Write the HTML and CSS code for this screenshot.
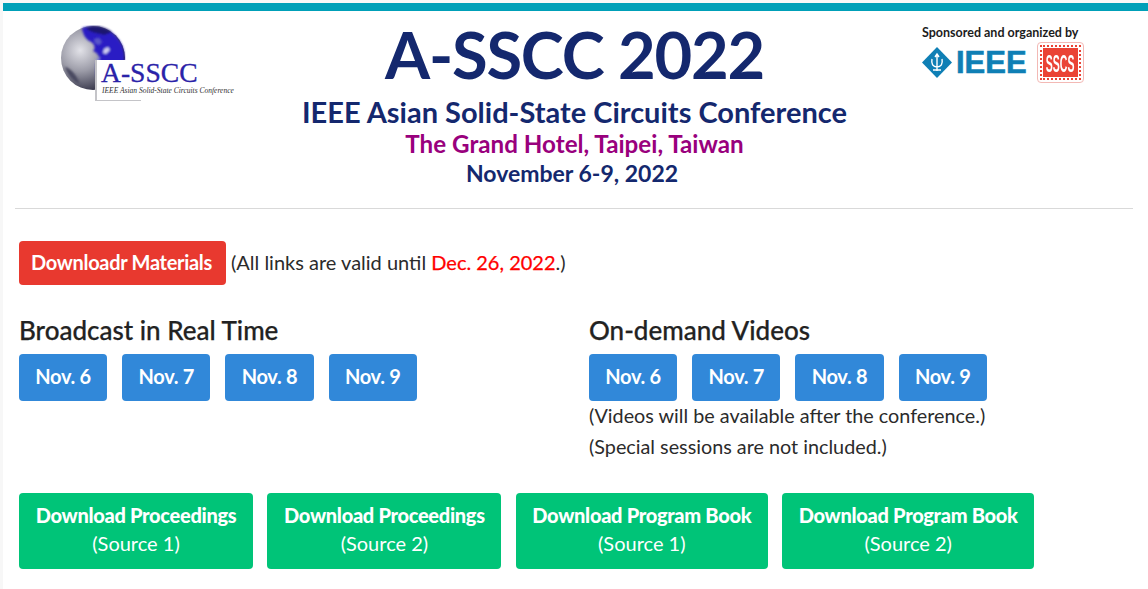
FILE: index.html
```html
<!DOCTYPE html>
<html lang="en">
<head>
    <meta charset="UTF-8">
    <meta name="viewport" content="width=device-width, initial-scale=1.0">
    <title>A-SSCC 2022</title>
    <link rel="stylesheet" href="styles.css">
</head>
<body>
    <div class="page">
        <header class="banner">
            <div class="logo">
                <svg class="globe" width="66" height="66" viewBox="0 0 66 66">
                    <defs>
                        <radialGradient id="globeFill" cx="0.3" cy="0.38" r="0.72">
                            <stop offset="0" stop-color="#e2e2e8"/>
                            <stop offset="0.45" stop-color="#9c9ca8"/>
                            <stop offset="1" stop-color="#25253a"/>
                        </radialGradient>
                        <filter id="soft"><feGaussianBlur stdDeviation="1"/></filter>
                    </defs>
                    <circle cx="33" cy="33" r="32" fill="url(#globeFill)"/>
                    <g filter="url(#soft)">
                        <path d="M22 3 C36 -2 54 3 62 20 C66 30 65 42 60 52 L36 52 L36 38 C41 34 39 28 33 26 C37 22 33 17 29 16 C25 13 23 9 22 3 Z" fill="#2a1dc4"/>
                        <path d="M26 3 C34 0 44 1 52 7 L44 10 C38 8 31 8 26 3 Z" fill="#1a1470"/>
                        <path d="M34 14 L39 13 L42 17 L39 20 L35 18 Z" fill="#5a56c8"/>
                        <path d="M44 24 L48 22 L50 25 L46 29 L43 28 Z" fill="#cfcef0"/>
                        <path d="M37 33 L40 32 L39 37 L36 38 Z" fill="#8a88d8"/>
                        <path d="M5 42 C10 43 16 49 20 59 C14 57 8 51 5 42 Z" fill="#4a4a60"/>
                    </g>
                </svg>
                <div class="logo-box">
                    <div class="logo-name">A-SSCC</div>
                    <div class="logo-sub">IEEE Asian Solid-State Circuits Conference</div>
                </div>
            </div>
            <div class="titles">
                <h1>A-SSCC 2022</h1>
                <div class="subtitle">IEEE Asian Solid-State Circuits Conference</div>
                <div class="venue">The Grand Hotel, Taipei, Taiwan</div>
                <div class="dates">November 6-9, 2022</div>
            </div>
            <div class="sponsor">
                <div class="sponsor-text">Sponsored and organized by</div>
                <div class="sponsor-logos">
                    <svg width="30" height="31" viewBox="0 0 30 31">
                        <path d="M15 0 L30 15.5 L15 31 L0 15.5 Z" fill="#0f7fb5"/>
                        <path d="M15 7 V24 M13 10 L15 7 L17 10 M10 12 C9 17 11 20 15 20 C19 20 21 17 20 12 M11 23 H19" stroke="#fff" stroke-width="1.4" fill="none"/>
                    </svg>
                    <span class="ieee">IEEE</span>
                    <div class="sscs">
                        <div class="sscs-face"><span class="sscs-text">SSCS</span></div>
                    </div>
                </div>
            </div>
        </header>

        <hr class="divider">

        <main class="content">
            <div class="materials">
                <a class="btn btn-red">Downloadr Materials</a>
                <span class="note">(All links are valid until <span class="deadline">Dec. 26, 2022</span>.)</span>
            </div>

            <div class="columns">
                <section>
                    <h2>Broadcast in Real Time</h2>
                    <div class="btn-row">
                        <a class="btn btn-blue">Nov. 6</a>
                        <a class="btn btn-blue">Nov. 7</a>
                        <a class="btn btn-blue">Nov. 8</a>
                        <a class="btn btn-blue">Nov. 9</a>
                    </div>
                </section>
                <section>
                    <h2>On-demand Videos</h2>
                    <div class="btn-row">
                        <a class="btn btn-blue">Nov. 6</a>
                        <a class="btn btn-blue">Nov. 7</a>
                        <a class="btn btn-blue">Nov. 8</a>
                        <a class="btn btn-blue">Nov. 9</a>
                    </div>
                    <p class="video-note">(Videos will be available after the conference.)</p>
                    <p class="video-note">(Special sessions are not included.)</p>
                </section>
            </div>

            <div class="downloads">
                <a class="btn btn-green"><strong>Download Proceedings</strong><span>(Source 1)</span></a>
                <a class="btn btn-green"><strong>Download Proceedings</strong><span>(Source 2)</span></a>
                <a class="btn btn-green"><strong>Download Program Book</strong><span>(Source 1)</span></a>
                <a class="btn btn-green"><strong>Download Program Book</strong><span>(Source 2)</span></a>
            </div>
        </main>
    </div>
</body>
</html>
```

FILE: styles.css
```css
* {
    margin: 0;
    padding: 0;
    box-sizing: border-box;
}
body {
    font-family: 'Lato', 'Noto Sans', sans-serif;
    background: #f7f7f7;
    color: #2b2b2b;
    height: 589px;
    overflow: hidden;
    padding: 3px 0 0 3px;
}
.page {
    background: #fff;
    border-top: 8px solid #00a0b8;
    height: 586px;
}
.banner {
    display: grid;
    grid-template-columns: 241px 547px 1fr;
    height: 197px;
    padding-left: 57px;
}
.logo {
    position: relative;
    padding-top: 14px;
}
.logo-box {
    position: absolute;
    left: 35px;
    top: 49px;
    width: 138px;
    height: 41px;
    background: linear-gradient(to right, #fff 85%, transparent);
    border-left: 2px solid #c4c4c8;
    padding-left: 5px;
}
.logo-box::after {
    content: "";
    position: absolute;
    left: 0;
    bottom: 0;
    width: 44px;
    border-bottom: 1px solid #c4c4c8;
}
.logo-name {
    font-family: 'Liberation Serif', serif;
    font-size: 27.6px;
    line-height: 26px;
    color: #2a22a8;
    -webkit-text-stroke: 0.3px #2a22a8;
    margin-left: -1px;
}
.logo-sub {
    font-family: 'Liberation Serif', serif;
    font-style: italic;
    font-size: 7.5px;
    white-space: nowrap;
    color: #333;
}
.titles {
    text-align: center;
    font-weight: bold;
    color: #14286e;
}
h1 {
    font-size: 65px;
    line-height: 79px;
    margin-top: 4px;
    color: #14286e;
    letter-spacing: -1.2px;
}
.subtitle {
    font-size: 29px;
    line-height: 35px;
}
.venue {
    font-size: 24.2px;
    line-height: 30px;
    color: #99007d;
}
.dates {
    font-size: 23px;
    line-height: 28px;
    padding-right: 5px;
}
.sponsor {
    padding: 14px 0 0 74px;
}
.sponsor-text {
    font-size: 12.5px;
    font-weight: bold;
    color: #1c1c1c;
    line-height: 16px;
    white-space: nowrap;
}
.sponsor-logos {
    display: flex;
    align-items: center;
    margin-top: 1px;
}
.sponsor-logos svg {
    margin-right: 4px;
}
.ieee {
    font-family: 'Liberation Sans', sans-serif;
    font-weight: bold;
    font-size: 31px;
    line-height: 30px;
    color: #0f7fb5;
    -webkit-text-stroke: 0.6px #0f7fb5;
}
.sscs {
    width: 47px;
    height: 41px;
    margin-left: 10px;
    border: 1px solid #f3b9b5;
    border-radius: 4px;
    padding: 5px;
    display: flex;
}
.sscs-face {
    flex: 1;
    display: flex;
    align-items: center;
    justify-content: center;
    background: #ea4335;
    outline: 2px dotted #ea4335;
    outline-offset: 1px;
}
.sscs-text {
    color: #fff;
    font-family: 'Liberation Sans', sans-serif;
    font-weight: bold;
    font-size: 10.5px;
    line-height: 12px;
    transform: scaleY(2.3);
}
.divider {
    border: none;
    border-top: 1px solid #d9d9d9;
    margin: 0 15px 0 12px;
}
.content {
    padding: 32px 16px 0;
}
.btn {
    display: inline-block;
    color: #fff;
    font-weight: bold;
    border-radius: 4px;
    text-align: center;
    font-size: 20px;
    letter-spacing: -0.3px;
}
.btn-red {
    background: #e8392f;
    width: 207px;
    height: 44px;
    line-height: 43px;
    padding-right: 2px;
}
.btn-blue {
    background: #3188d9;
    width: 88.2px;
    height: 47px;
    line-height: 44px;
}
.btn-green {
    background: #00c478;
    height: 76px;
    padding-top: 8px;
}
.btn-green strong {
    display: block;
    line-height: 29px;
}
.btn-green span {
    display: block;
    font-weight: normal;
    font-size: 20px;
    line-height: 27px;
    letter-spacing: 0;
}
.materials {
    display: flex;
    align-items: center;
    gap: 5px;
}
.note {
    font-size: 20px;
    position: relative;
    top: -1px;
}
.deadline {
    color: #f00;
    -webkit-text-stroke: 0.25px #f00;
}
.columns {
    display: grid;
    grid-template-columns: 570px 1fr;
    margin-top: 29px;
    height: 179px;
}
h2 {
    font-size: 26px;
    font-weight: 500;
    line-height: 32px;
    color: #222;
    margin-bottom: 8px;
    -webkit-text-stroke: 0.25px #222;
}
.btn-row {
    display: flex;
    gap: 15px;
}
.video-note {
    font-size: 19.8px;
    line-height: 31px;
}
.video-note:first-of-type {
    margin-top: -1px;
}
.downloads {
    display: flex;
    gap: 14.4px;
}
.btn-green:nth-child(1), .btn-green:nth-child(2) {
    width: 234px;
}
.btn-green:nth-child(3), .btn-green:nth-child(4) {
    width: 252px;
}
```
